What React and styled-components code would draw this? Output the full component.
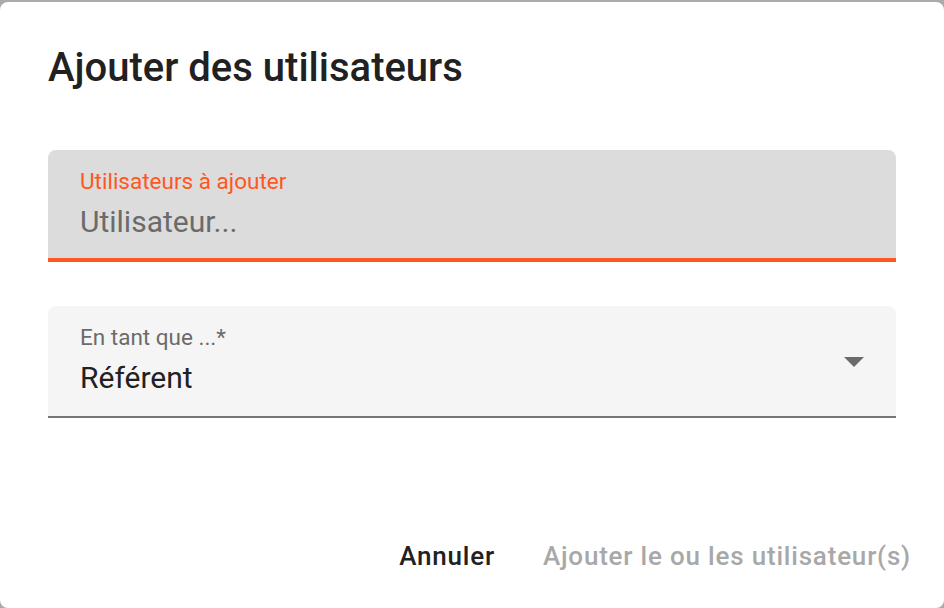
import React from 'react';
import styled, { createGlobalStyle } from 'styled-components';

const GlobalStyle = createGlobalStyle`
    html, body {
        margin: 0;
        padding: 0;
        background: #aaaaaa;
        font-family: Roboto, "Liberation Sans", Arial, sans-serif;
    }
    * {
        box-sizing: border-box;
    }
`

const Dialog = styled.div`
    margin-top: 2px;
    height: 606px;
    background: #ffffff;
    border-radius: 8px;
    display: flex;
    flex-direction: column;
    overflow: hidden;
`

const Title = styled.h2`
    margin: 0;
    padding: 38px 48px 0;
    font-size: 40px;
    line-height: 56px;
    font-weight: 500;
    color: #212121;
`

const Content = styled.div`
    display: flex;
    flex-direction: column;
    gap: 44px;
    padding: 54px 48px 0;
    flex: 1;
`

const Field = styled.div`
    position: relative;
    height: 112px;
    padding: 18px 32px 0;
    background: ${props => props.focused ? '#dcdcdc' : '#f5f5f5'};
    border-radius: 8px 8px 0 0;
    border-bottom: ${props => props.focused ? '4px solid #ff5722' : '2px solid #757575'};
    display: flex;
    flex-direction: column;
`

const Label = styled.label`
    font-size: 22.5px;
    line-height: 26px;
    color: ${props => props.focused ? '#ff5722' : '#6b6b6b'};
`

const Input = styled.input`
    margin-top: 10px;
    padding: 0;
    border: none;
    outline: none;
    background: transparent;
    font-family: inherit;
    font-size: 30px;
    line-height: 36px;
    height: 36px;
    color: #212121;

    &::placeholder {
        color: #6b6b6b;
        opacity: 1;
    }
`

const Value = styled.div`
    margin-top: 10px;
    font-size: 30px;
    line-height: 36px;
    color: #212121;
`

const Arrow = styled.svg`
    position: absolute;
    right: 32px;
    top: 51px;
`

const Actions = styled.div`
    display: flex;
    justify-content: flex-end;
    gap: 16px;
    padding: 0 17px 22px;
`

const Button = styled.button`
    border: none;
    background: transparent;
    padding: 12px 16px;
    font-family: inherit;
    font-size: 26px;
    line-height: 36px;
    font-weight: 500;
    letter-spacing: 0.8px;
    color: ${props => props.disabled ? '#a8a8a8' : '#212121'};
    cursor: ${props => props.disabled ? 'default' : 'pointer'};
`

export default function App() {
    return (
        <>
            <GlobalStyle />
            <Dialog>
                <Title>Ajouter des utilisateurs</Title>
                <Content>
                    <Field focused>
                        <Label focused>Utilisateurs à ajouter</Label>
                        <Input placeholder="Utilisateur..." />
                    </Field>
                    <Field>
                        <Label>En tant que ...*</Label>
                        <Value>Référent</Value>
                        <Arrow width="20" height="10" viewBox="0 0 20 10">
                            <path d="M0 0 L20 0 L10 10 Z" fill="#6b6b6b" />
                        </Arrow>
                    </Field>
                </Content>
                <Actions>
                    <Button>Annuler</Button>
                    <Button disabled>Ajouter le ou les utilisateur(s)</Button>
                </Actions>
            </Dialog>
        </>
    )
}
